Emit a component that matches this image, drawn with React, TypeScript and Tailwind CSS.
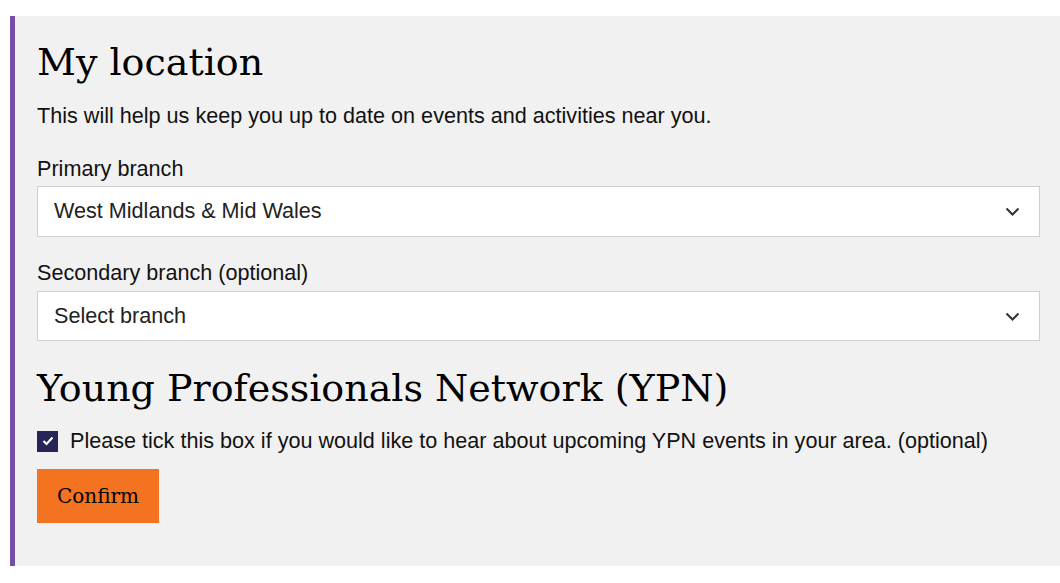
export default function App() {
  return (
    <div className="w-[1060px] h-[583px] bg-white pt-4" style={{ fontFamily: '"Liberation Sans", Arial, sans-serif' }}>
      <div className="ml-[10px] h-[550px] bg-[#f1f1f1] border-l-[5px] border-[#764ea3] pl-[22px] pr-5 pt-[20px] text-[#111]">
        <h1 className="text-[38px] leading-[52px] text-black" style={{ fontFamily: '"DejaVu Serif", serif' }}>My location</h1>
        <p className="mt-[16px] text-[21.6px] leading-[24px]">This will help us keep you up to date on events and activities near you.</p>

        <label className="block mt-[29px] text-[21.6px] leading-[24px]">Primary branch</label>
        <div className="mt-[5px] h-[51px] bg-white border border-[#cfcfcf] flex items-center justify-between pl-4 pr-[19px]">
          <span className="text-[21.6px] text-[#222]">West Midlands &amp; Mid Wales</span>
          <svg width="15" height="9" viewBox="0 0 15 9" fill="none" stroke="#333" strokeWidth="2"><path d="M1.5 1.5l6 6 6-6" /></svg>
        </div>

        <label className="block mt-[24px] text-[21.6px] leading-[24px]">Secondary branch (optional)</label>
        <div className="mt-[6px] h-[50px] bg-white border border-[#cfcfcf] flex items-center justify-between pl-4 pr-[19px]">
          <span className="text-[21.6px] text-[#222]">Select branch</span>
          <svg width="15" height="9" viewBox="0 0 15 9" fill="none" stroke="#333" strokeWidth="2"><path d="M1.5 1.5l6 6 6-6" /></svg>
        </div>

        <h2 className="mt-[21px] text-[38px] leading-[52px] text-black" style={{ fontFamily: '"DejaVu Serif", serif' }}>Young Professionals Network (YPN)</h2>

        <div className="mt-[15px] flex items-center gap-3">
          <span className="w-[21px] h-[21px] bg-[#27245a] flex items-center justify-center">
            <svg width="12" height="10" viewBox="0 0 12 10" fill="none" stroke="#fff" strokeWidth="2.2"><path d="M1.5 5l3 3 6-6.5" /></svg>
          </span>
          <span className="text-[21.6px] leading-[24px]">Please tick this box if you would like to hear about upcoming YPN events in your area. (optional)</span>
        </div>

        <button className="mt-[16px] w-[122px] h-[54px] bg-[#f47321] text-black text-[20px]" style={{ fontFamily: '"DejaVu Serif", serif' }}>Confirm</button>
      </div>
    </div>
  );
}
